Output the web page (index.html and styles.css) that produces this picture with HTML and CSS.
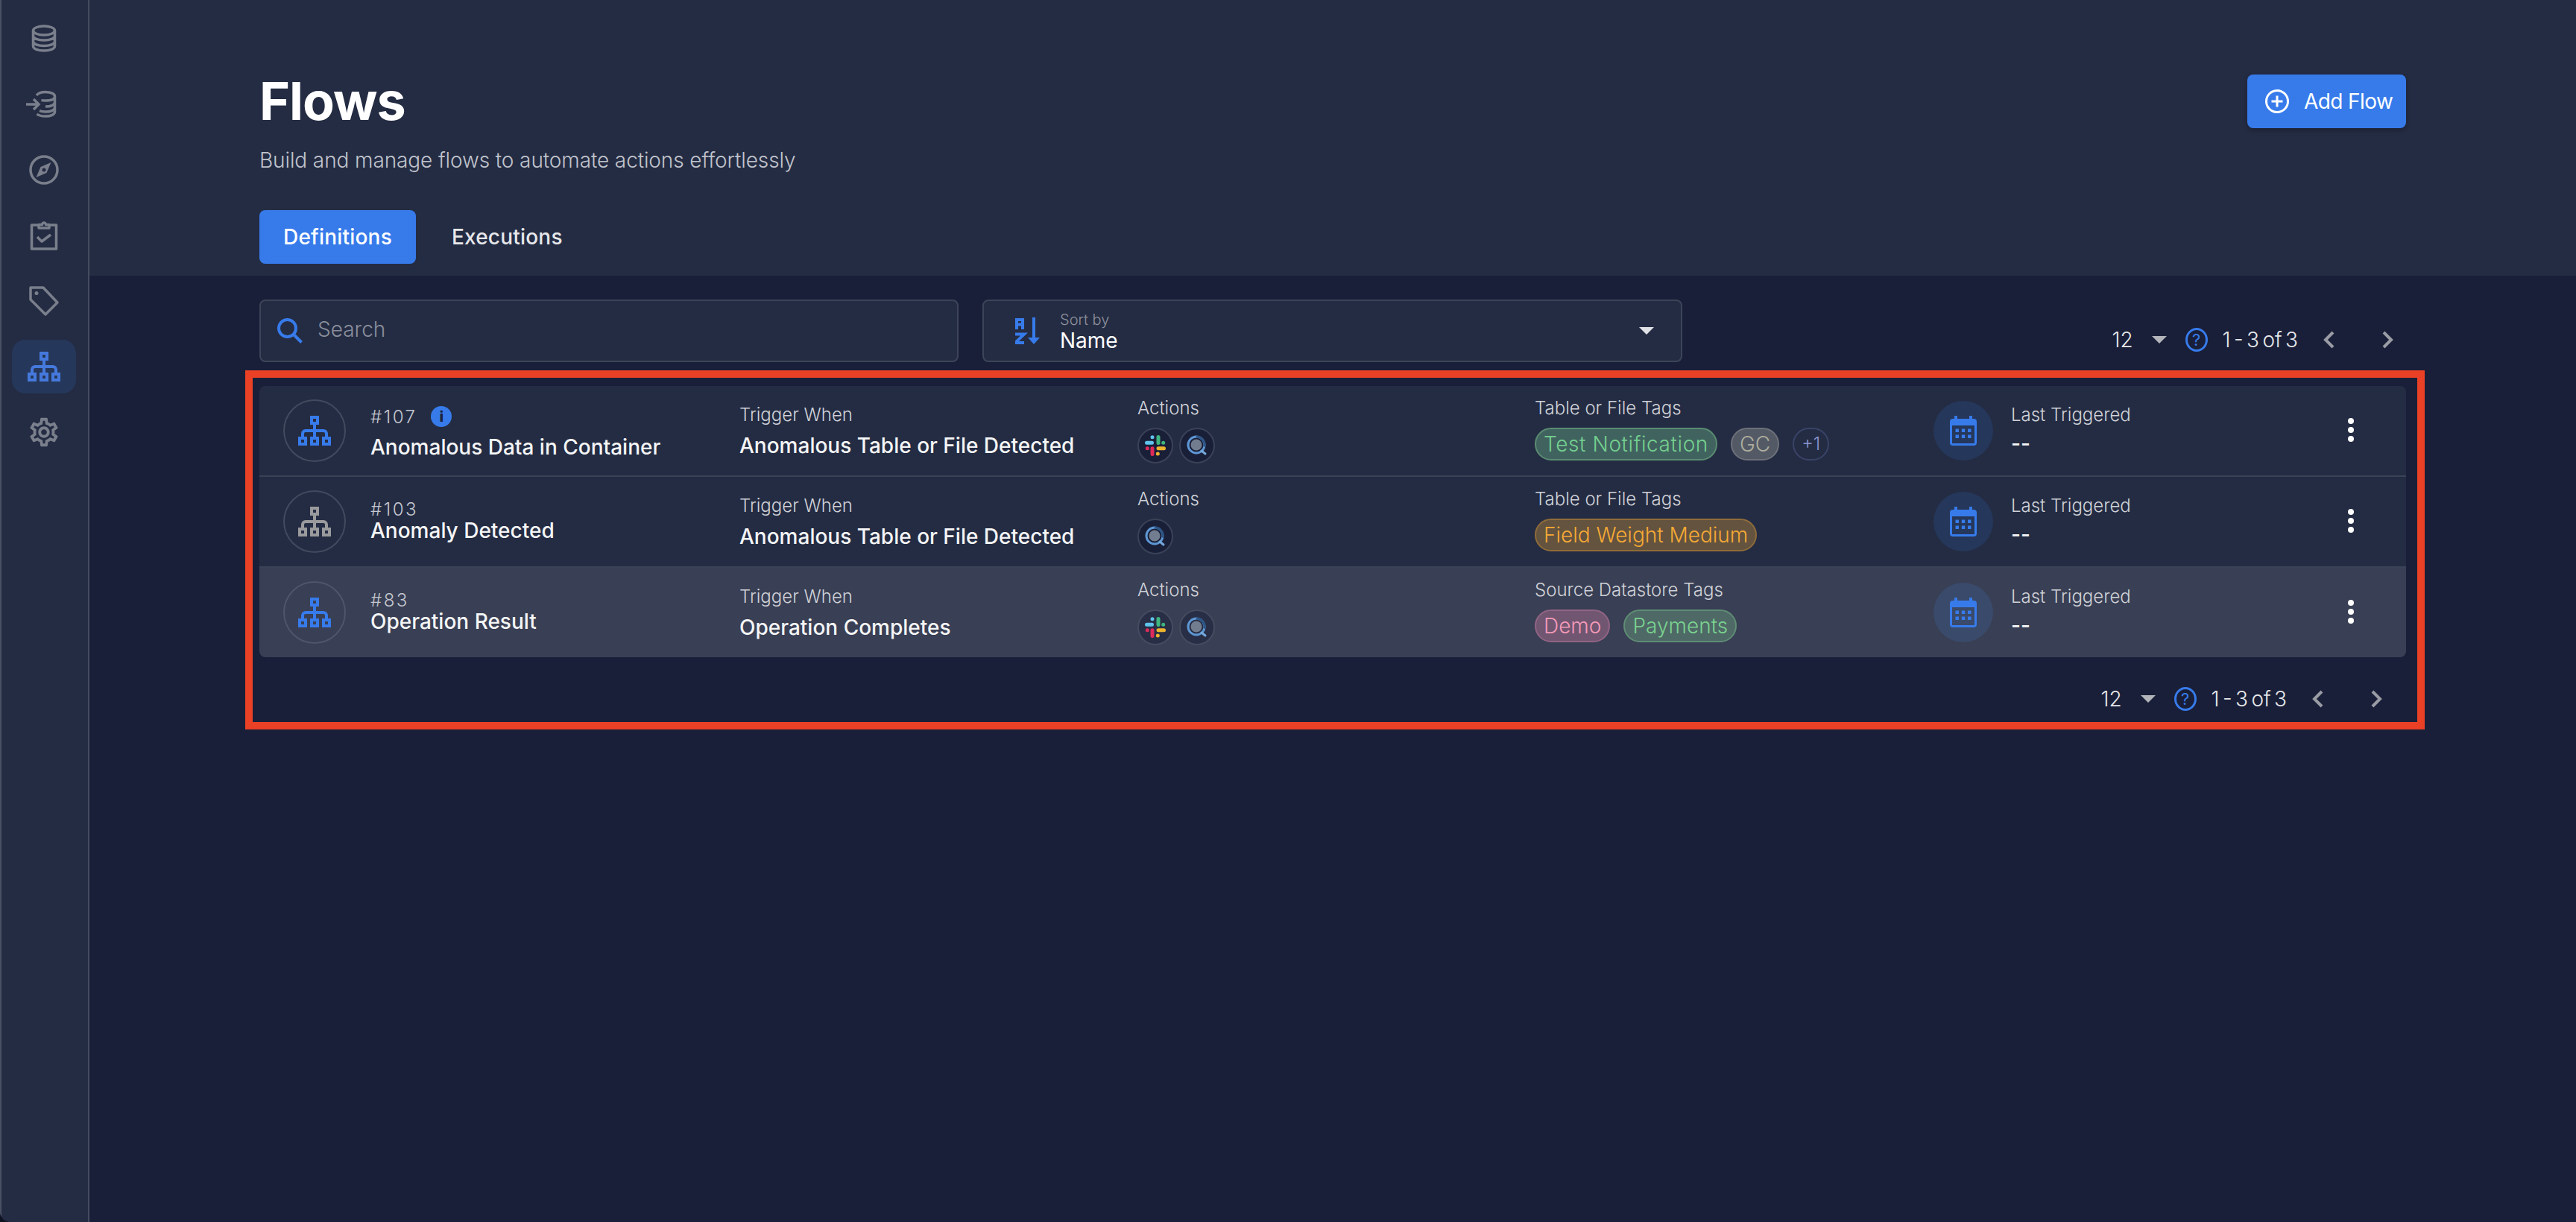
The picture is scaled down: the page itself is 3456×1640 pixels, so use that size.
FILE: index.html
```html
<!DOCTYPE html>
<html lang="en">
<head>
    <meta charset="UTF-8">
    <title>Flows</title>
    <link rel="stylesheet" href="styles.css">
</head>
<body>
    <!-- Shared icons -->
    <svg class="icon-defs" width="0" height="0">
        <symbol id="flow-icon" viewBox="0 0 44 40">
            <path fill="currentColor" fill-rule="evenodd" d="M16 0h12v12H16zM20 4v4h4V4zM0 28h12v12H0zM4 32v4h4v-4zM16 28h12v12H16zM20 32v4h4v-4zM32 28h12v12H32zM36 32v4h4v-4z"/>
            <path fill="none" stroke="currentColor" stroke-width="4" d="M22 12v16M6 28v-4a4 4 0 0 1 4-4h24a4 4 0 0 1 4 4v4"/>
        </symbol>
        <symbol id="calendar-icon" viewBox="0 0 36 40">
            <path fill="currentColor" fill-rule="evenodd" d="M6 0h4v4h16V0h4v4h2a4 4 0 0 1 4 4v28a4 4 0 0 1-4 4H4a4 4 0 0 1-4-4V8a4 4 0 0 1 4-4h2zM3 13v24h30V13z"/>
            <path fill="currentColor" d="M7.500 17.500h4.500v4.500H7.500zM15.800 17.500h4.500v4.500h-4.500zM24 17.500h4.500v4.500H24zM7.500 25.500h4.500v4.500H7.500zM15.800 25.500h4.500v4.500h-4.500zM24 25.500h4.500v4.500H24z"/>
        </symbol>
        <symbol id="slack-icon" viewBox="0 0 28 28">
            <g fill="none" stroke-width="5" stroke-linecap="round">
                <path stroke="#5fc3ea" d="M2.500 10.200h7M10 2.700h.01"/>
                <path stroke="#3fb57f" d="M18 2.500v8M24.700 10.300h.01"/>
                <path stroke="#dd2a5b" d="M3.300 17.700h.01M10 17.800v7.700"/>
                <path stroke="#ecb32e" d="M18 17.800h7.500M17.300 25h.01"/>
            </g>
        </symbol>
        <symbol id="quality-icon" viewBox="0 0 28 28">
            <circle cx="13" cy="13" r="7.500" fill="#727d90"/>
            <circle cx="13" cy="13" r="11" fill="none" stroke="#5e97d4" stroke-width="3"/>
            <path fill="none" stroke="#2c5484" stroke-width="3" d="M13 2a11 11 0 0 1 10.700 13.500"/>
            <path fill="none" stroke="#74a8dc" stroke-width="3" stroke-linecap="round" d="M20 21l5 4"/>
        </symbol>
        <symbol id="chevron-left" viewBox="0 0 16 24">
            <path fill="none" stroke="currentColor" stroke-width="4" d="M14 2L4 12l10 10"/>
        </symbol>
        <symbol id="chevron-right" viewBox="0 0 16 24">
            <path fill="none" stroke="currentColor" stroke-width="4" d="M2 2l10 10L2 22"/>
        </symbol>
    </svg>

    <div class="app">
        <!-- Sidebar -->
        <nav class="sidebar">
            <a class="nav-item">
                <svg class="nav-icon" viewBox="0 0 40 40" fill="none" stroke="currentColor" stroke-width="3.500">
                    <ellipse cx="20" cy="9" rx="14.500" ry="6"/>
                    <path d="M5.500 9v21c0 3.500 6.500 6 14.500 6s14.500-2.500 14.500-6V9M5.500 16c0 3.500 6.500 6 14.500 6s14.500-2.500 14.500-6M5.500 23.500c0 3.500 6.500 6 14.500 6s14.500-2.500 14.500-6"/>
                </svg>
            </a>
            <a class="nav-item">
                <svg class="nav-icon" viewBox="0 0 40 40" fill="none" stroke="currentColor" stroke-width="3.500">
                    <path d="M10 8c2-2.800 6-4.500 12-4.500 7.500 0 12.500 2.500 12.500 6S29.500 15 22 15c-2 0-4-.2-5.500-.7M34.500 9.500V30c0 3.500-5 6-12.500 6-5 0-9-1-11.500-3M34.500 17c0 3.500-5 6-12.500 6M34.500 24c0 3.500-5 6-12.500 6-3 0-5.500-.4-8-1.300"/>
                    <path d="M-4 20h17M6 13l7 7-7 7"/>
                </svg>
            </a>
            <a class="nav-item">
                <svg class="nav-icon" viewBox="0 0 40 40" fill="none" stroke="currentColor" stroke-width="3.500">
                    <circle cx="20" cy="20" r="18"/>
                    <path fill="currentColor" stroke="none" fill-rule="evenodd" d="M29.500 10l-6 14-14 6 6-14zM20 17.500a2.500 2.500 0 1 0 0 5 2.500 2.500 0 0 0 0-5z"/>
                </svg>
            </a>
            <a class="nav-item">
                <svg class="nav-icon" viewBox="0 0 40 40" fill="none" stroke="currentColor" stroke-width="3.500" stroke-linejoin="round">
                    <path d="M13 6H3.500v32h33V6H27"/>
                    <path d="M13 10V5.500h4.500a2.500 2.500 0 0 1 5 0H27V10z"/>
                    <path d="M11 22l6 6 12-9"/>
                </svg>
            </a>
            <a class="nav-item">
                <svg class="nav-icon" viewBox="0 0 40 40" fill="none" stroke="currentColor" stroke-width="3.500" stroke-linejoin="round">
                    <path d="M2 2h17l19 20-16 16L2 18z"/>
                    <circle cx="10" cy="9.500" r="2.500" fill="currentColor" stroke="none"/>
                </svg>
            </a>
            <a class="nav-item nav-item-active">
                <svg class="flow-svg"><use href="#flow-icon"/></svg>
            </a>
            <a class="nav-item">
                <svg class="gear-icon" viewBox="0 0 24 24" fill="currentColor">
                    <path d="M19.430 12.980c.04-.32.07-.64.07-.98 0-.34-.03-.66-.07-.98l2.110-1.650c.19-.15.24-.42.12-.64l-2-3.460c-.09-.16-.26-.25-.44-.25-.06 0-.12.01-.17.03l-2.490 1c-.52-.4-1.080-.73-1.690-.98l-.38-2.650C14.460 2.180 14.250 2 14 2h-4c-.25 0-.46.18-.49.42l-.38 2.650c-.61.25-1.170.59-1.690.98l-2.490-1c-.06-.02-.12-.03-.18-.03-.17 0-.34.09-.43.25l-2 3.460c-.13.22-.07.49.12.64l2.110 1.650c-.04.32-.07.65-.07.98 0 .33.03.66.07.98l-2.110 1.650c-.19.15-.24.42-.12.64l2 3.460c.09.16.26.25.44.25.06 0 .12-.01.17-.03l2.490-1c.52.4 1.080.73 1.690.98l.38 2.650c.03.24.24.42.49.42h4c.25 0 .46-.18.49-.42l.38-2.650c.61-.25 1.170-.59 1.690-.98l2.490 1c.06.02.12.03.18.03.17 0 .34-.09.43-.25l2-3.460c.12-.22.07-.49-.12-.64l-2.110-1.650zm-1.980-1.710c.04.31.05.52.05.73 0 .21-.02.43-.05.73l-.14 1.130.89.7 1.080.84-.7 1.210-1.270-.51-1.040-.42-.9.68c-.43.32-.84.56-1.250.73l-1.060.43-.16 1.130-.2 1.350h-1.400l-.19-1.350-.16-1.130-1.060-.43c-.43-.18-.83-.41-1.230-.71l-.91-.7-1.060.43-1.270.51-.7-1.210 1.080-.84.89-.7-.14-1.130c-.03-.31-.05-.54-.05-.74s.02-.43.05-.73l.14-1.130-.89-.7-1.080-.84.7-1.210 1.270.51 1.040.42.9-.68c.43-.32.84-.56 1.250-.73l1.060-.43.16-1.130.2-1.350h1.390l.19 1.350.16 1.130 1.060.43c.43.18.83.41 1.230.71l.91.7 1.060-.43 1.270-.51.7 1.210-1.070.85-.89.7.14 1.130zM12 8c-2.210 0-4 1.790-4 4s1.790 4 4 4 4-1.790 4-4-1.790-4-4-4zm0 6c-1.100 0-2-.9-2-2s.9-2 2-2 2 .9 2 2-.9 2-2 2z"/>
                </svg>
            </a>
        </nav>

        <main class="main">
            <!-- Page header -->
            <header class="page-head">
                <div class="head-top">
                    <div>
                        <h1 class="page-title">Flows</h1>
                        <p class="page-subtitle">Build and manage flows to automate actions effortlessly</p>
                    </div>
                    <button class="add-button">
                        <svg class="add-icon" viewBox="0 0 32 32" fill="none" stroke="currentColor" stroke-width="3">
                            <circle cx="16" cy="16" r="14.500"/>
                            <path d="M16 8.500v15M8.500 16h15"/>
                        </svg>
                        Add Flow
                    </button>
                </div>
                <div class="tabs">
                    <div class="tab tab-active">Definitions</div>
                    <div class="tab">Executions</div>
                </div>
            </header>

            <section class="content">
                <!-- Search, sort, pagination -->
                <div class="toolbar">
                    <div class="field search-field">
                        <svg class="search-icon" viewBox="0 0 34 34" fill="none" stroke="currentColor" stroke-width="4">
                            <circle cx="13.500" cy="13.500" r="11.500"/>
                            <path d="M22 22l10.500 10.500"/>
                        </svg>
                        <span class="search-text">Search</span>
                    </div>
                    <div class="field sort-field">
                        <svg class="sort-icon" viewBox="0 0 34 36" fill="none" stroke="currentColor" stroke-width="4">
                            <path d="M2 16V3h8v13M2 9.500h8"/>
                            <path d="M0 22.500h12L0 34h12"/>
                            <path d="M25 0v28"/>
                            <path fill="currentColor" stroke="none" d="M17 27h16l-8 9z"/>
                        </svg>
                        <div class="sort-text">
                            <span class="sort-label">Sort by</span>
                            <span class="sort-value">Name</span>
                        </div>
                        <span class="sort-caret"></span>
                    </div>
                    <div class="pagination">
                        <span>12</span>
                        <span class="page-caret"></span>
                        <span class="help-icon">?</span>
                        <span class="page-range">1 - 3 of 3</span>
                        <svg class="chevron chevron-prev"><use href="#chevron-left"/></svg>
                        <svg class="chevron chevron-next"><use href="#chevron-right"/></svg>
                    </div>
                </div>

                <div class="panel">
                    <div class="flow-list">
                        <!-- Flow 107 -->
                        <div class="flow-row">
                            <div class="flow-name flow-name-info">
                                <div class="flow-avatar"><svg class="flow-svg"><use href="#flow-icon"/></svg></div>
                                <div>
                                    <div class="flow-id-line">
                                        <span class="flow-id">#107</span>
                                        <span class="info-icon">i</span>
                                    </div>
                                    <div class="flow-title">Anomalous Data in Container</div>
                                </div>
                            </div>
                            <div class="flow-trigger">
                                <div class="label">Trigger When</div>
                                <div class="trigger-value">Anomalous Table or File Detected</div>
                            </div>
                            <div class="flow-stack">
                                <div class="label">Actions</div>
                                <div class="action-icons">
                                    <span class="action-icon"><svg><use href="#slack-icon"/></svg></span>
                                    <span class="action-icon"><svg><use href="#quality-icon"/></svg></span>
                                </div>
                            </div>
                            <div class="flow-stack">
                                <div class="label">Table or File Tags</div>
                                <div class="tags">
                                    <span class="tag tag-green">Test Notification</span>
                                    <span class="tag tag-gray">GC</span>
                                    <span class="tag tag-more">+1</span>
                                </div>
                            </div>
                            <div class="flow-last">
                                <div class="calendar-badge"><svg><use href="#calendar-icon"/></svg></div>
                                <div class="last-text">
                                    <div class="label">Last Triggered</div>
                                    <div class="last-value">--</div>
                                </div>
                                <div class="more-dots"><i></i><i></i><i></i></div>
                            </div>
                        </div>

                        <!-- Flow 103 -->
                        <div class="flow-row">
                            <div class="flow-name">
                                <div class="flow-avatar flow-avatar-off"><svg class="flow-svg"><use href="#flow-icon"/></svg></div>
                                <div>
                                    <div class="flow-id-line"><span class="flow-id">#103</span></div>
                                    <div class="flow-title">Anomaly Detected</div>
                                </div>
                            </div>
                            <div class="flow-trigger">
                                <div class="label">Trigger When</div>
                                <div class="trigger-value">Anomalous Table or File Detected</div>
                            </div>
                            <div class="flow-stack">
                                <div class="label">Actions</div>
                                <div class="action-icons">
                                    <span class="action-icon"><svg><use href="#quality-icon"/></svg></span>
                                </div>
                            </div>
                            <div class="flow-stack">
                                <div class="label">Table or File Tags</div>
                                <div class="tags">
                                    <span class="tag tag-orange">Field Weight Medium</span>
                                </div>
                            </div>
                            <div class="flow-last">
                                <div class="calendar-badge"><svg><use href="#calendar-icon"/></svg></div>
                                <div class="last-text">
                                    <div class="label">Last Triggered</div>
                                    <div class="last-value">--</div>
                                </div>
                                <div class="more-dots"><i></i><i></i><i></i></div>
                            </div>
                        </div>

                        <!-- Flow 83 (hovered) -->
                        <div class="flow-row flow-row-hover">
                            <div class="flow-name">
                                <div class="flow-avatar"><svg class="flow-svg"><use href="#flow-icon"/></svg></div>
                                <div>
                                    <div class="flow-id-line"><span class="flow-id">#83</span></div>
                                    <div class="flow-title">Operation Result</div>
                                </div>
                            </div>
                            <div class="flow-trigger">
                                <div class="label">Trigger When</div>
                                <div class="trigger-value">Operation Completes</div>
                            </div>
                            <div class="flow-stack">
                                <div class="label">Actions</div>
                                <div class="action-icons">
                                    <span class="action-icon"><svg><use href="#slack-icon"/></svg></span>
                                    <span class="action-icon"><svg><use href="#quality-icon"/></svg></span>
                                </div>
                            </div>
                            <div class="flow-stack">
                                <div class="label">Source Datastore Tags</div>
                                <div class="tags">
                                    <span class="tag tag-pink">Demo</span>
                                    <span class="tag tag-mint">Payments</span>
                                </div>
                            </div>
                            <div class="flow-last">
                                <div class="calendar-badge"><svg><use href="#calendar-icon"/></svg></div>
                                <div class="last-text">
                                    <div class="label">Last Triggered</div>
                                    <div class="last-value">--</div>
                                </div>
                                <div class="more-dots"><i></i><i></i><i></i></div>
                            </div>
                        </div>
                    </div>

                    <div class="pagination pagination-bottom">
                        <span>12</span>
                        <span class="page-caret"></span>
                        <span class="help-icon">?</span>
                        <span class="page-range">1 - 3 of 3</span>
                        <svg class="chevron chevron-prev"><use href="#chevron-left"/></svg>
                        <svg class="chevron chevron-next"><use href="#chevron-right"/></svg>
                    </div>

                    <!-- Annotation drawn over the list -->
                    <div class="highlight-box"></div>
                </div>
            </section>
        </main>
    </div>
</body>
</html>
```

FILE: styles.css
```css
/* Base Styles */
* {
    margin: 0;
    padding: 0;
    box-sizing: border-box;
}

html, body {
    height: 100%;
}

body {
    background: #0f1220;
    color: #ffffff;
    font-family: Inter, "Noto Sans", sans-serif;
    font-size: 28px;
    overflow: hidden;
}

.icon-defs {
    position: absolute;
}

/* App */
.app {
    display: flex;
    height: 1640px;
    background: #191f38;
    border-bottom-left-radius: 14px;
    overflow: hidden;
}

/* Sidebar */
.sidebar {
    width: 120px;
    flex-shrink: 0;
    display: flex;
    flex-direction: column;
    gap: 16px;
    padding: 16px 0 0 14px;
    background: #242c43;
    border-left: 2px solid #4a5164;
    border-right: 2px solid #454c60;
}

.nav-item {
    width: 86px;
    height: 72px;
    display: flex;
    align-items: center;
    justify-content: center;
    border-radius: 18px;
    color: #7a7f8c;
}

.nav-item-active {
    background: #25375a;
    color: #4579dc;
}

.nav-icon {
    width: 40px;
    height: 40px;
    overflow: visible;
}

.gear-icon {
    width: 46px;
    height: 46px;
}

.flow-svg {
    width: 44px;
    height: 40px;
}

/* Page header */
.main {
    flex: 1;
    min-width: 0;
}

.page-head {
    height: 370px;
    padding: 100px 228px 0;
    background: #242c43;
}

.head-top {
    display: flex;
    justify-content: space-between;
    align-items: flex-start;
}

.page-title {
    font-size: 70px;
    font-weight: 700;
    line-height: 72px;
    letter-spacing: -1px;
}

.page-subtitle {
    margin-top: 26px;
    font-size: 28px;
    font-weight: 300;
    line-height: 34px;
    letter-spacing: -0.1px;
    color: #c0c3cc;
}

.add-button {
    width: 213px;
    height: 72px;
    display: flex;
    align-items: center;
    gap: 20px;
    padding-left: 24px;
    background: #377beb;
    color: white;
    border: none;
    border-radius: 8px;
    box-shadow: 0 3px 6px rgba(0,0,0,0.25);
    font-family: inherit;
    font-size: 28px;
    font-weight: 400;
    letter-spacing: -0.6px;
}

.add-icon {
    width: 32px;
    height: 32px;
    flex-shrink: 0;
}

.tabs {
    display: flex;
    gap: 8px;
    margin-top: 50px;
}

.tab {
    height: 72px;
    padding: 0 40px;
    display: flex;
    align-items: center;
    border-radius: 8px;
    font-weight: 500;
    letter-spacing: 0.2px;
    color: #e6e7ea;
}

.tab-active {
    background: #377beb;
    color: white;
    padding: 0 32px;
}

/* Toolbar */
.content {
    padding: 32px 228px 0;
}

.toolbar {
    display: flex;
    gap: 32px;
}

.field {
    height: 84px;
    width: 938px;
    display: flex;
    align-items: center;
    background: #242c43;
    border: 2px solid #3c4459;
    border-radius: 8px;
}

.sort-field {
    width: 939px;
}

.search-icon {
    width: 34px;
    height: 34px;
    margin-left: 22px;
    color: #377beb;
}

.search-text {
    margin: 0 0 4px 20px;
    font-weight: 300;
    color: #8a8e9c;
}

.sort-icon {
    width: 34px;
    height: 36px;
    margin-left: 42px;
    color: #377beb;
}

.sort-text {
    display: flex;
    flex-direction: column;
    margin: 4px 0 0 26px;
    flex: 1;
}

.sort-label {
    font-size: 20px;
    font-weight: 300;
    line-height: 22px;
    color: #8d919d;
}

.sort-value {
    line-height: 34px;
}

.sort-caret {
    margin-right: 36px;
    border-left: 10px solid transparent;
    border-right: 10px solid transparent;
    border-top: 10px solid #e0e1e5;
}

/* Pagination */
.pagination {
    display: flex;
    align-items: center;
    height: 32px;
    color: #e6e7ea;
    font-weight: 300;
}

.toolbar .pagination {
    margin: auto 16px 14px auto;
}

.pagination-bottom {
    justify-content: flex-end;
    margin: 40px 31px 0 0;
}

.page-caret {
    margin-left: 25px;
    border-left: 10px solid transparent;
    border-right: 10px solid transparent;
    border-top: 10px solid #b3b5bb;
}

.help-icon {
    width: 30px;
    height: 32px;
    margin-left: 25px;
    display: flex;
    align-items: center;
    justify-content: center;
    border: 3px solid #377beb;
    border-radius: 50%;
    color: #377beb;
    font-size: 22px;
    font-weight: 400;
}

.page-range {
    margin-left: 20px;
    word-spacing: -3.500px;
}

.chevron {
    width: 16px;
    height: 24px;
    color: #9a9ca5;
}

.chevron-prev {
    margin-left: 33px;
}

.chevron-next {
    margin-left: 64px;
}

/* Flow list */
.panel {
    position: relative;
    margin-top: 32px;
}

.flow-list {
    border-radius: 8px;
    overflow: hidden;
}

.flow-row {
    height: 122px;
    display: grid;
    grid-template-columns: 612px 534px 533px 535px 1fr;
    align-items: center;
    padding-left: 32px;
    background: #242c43;
    border-bottom: 2px solid #3a4257;
}

.flow-row:last-child {
    height: 120px;
    border-bottom: none;
}

.flow-row-hover {
    background: #393f54;
}

.flow-name {
    display: flex;
    align-items: center;
    gap: 33px;
}

.flow-avatar {
    width: 84px;
    height: 84px;
    flex-shrink: 0;
    display: flex;
    align-items: center;
    justify-content: center;
    border: 2px solid #414a5e;
    border-radius: 50%;
    color: #377beb;
}

.flow-row-hover .flow-avatar {
    border-color: #4f566a;
}

.flow-avatar-off {
    color: #9a9a9d;
}

.flow-id-line {
    display: flex;
    align-items: center;
    gap: 19px;
    height: 28px;
}

.flow-name-info .flow-id-line {
    height: 52px;
}

.flow-name-info {
    padding-bottom: 4px;
}

.flow-name-info .flow-avatar {
    margin-bottom: -4px;
}

.flow-id {
    font-size: 24px;
    font-weight: 300;
    letter-spacing: 2.500px;
    color: #c4c7cf;
}

.info-icon {
    width: 28px;
    height: 28px;
    display: flex;
    align-items: center;
    justify-content: center;
    background: #377beb;
    border-radius: 50%;
    color: #1a2340;
    font-size: 20px;
    font-weight: 800;
}

.flow-title, .trigger-value {
    font-size: 28px;
    font-weight: 500;
    line-height: 34px;
    color: #f4f5f6;
    white-space: nowrap;
}

.flow-title {
    margin: -2px 0 2px;
}

.label {
    font-size: 24px;
    font-weight: 300;
    line-height: 30px;
    color: #d0d2d8;
    white-space: nowrap;
}

.trigger-value {
    margin-top: 9px;
}

.flow-stack {
    padding-bottom: 2px;
}

.action-icons, .tags {
    display: flex;
    height: 48px;
    margin-top: 11px;
}

.action-icons {
    gap: 8px;
}

.action-icon {
    width: 48px;
    height: 48px;
    display: flex;
    align-items: center;
    justify-content: center;
    background: #1a1f38;
    border: 2px solid #3a4257;
    border-radius: 50%;
}

.flow-row-hover .action-icon {
    background: #282e45;
    border-color: #454c60;
}

.action-icon svg {
    width: 28px;
    height: 28px;
}

/* Tags */
.tags {
    gap: 18px;
}

.tag {
    height: 44px;
    padding: 0 10px;
    display: flex;
    align-items: center;
    border: 2px solid;
    border-radius: 22px;
    font-weight: 300;
    white-space: nowrap;
}

.tag-green {
    background: #416360;
    border-color: #5a8c72;
    color: #74d08f;
    letter-spacing: 0.6px;
}

.tag-gray {
    background: #535a66;
    border-color: #6d7179;
    color: #aeae9e;
}

.tag-more {
    background: transparent;
    border-color: #3a4468;
    color: #8b95cf;
    font-size: 24px;
}

.tag-orange {
    background: #63533f;
    border-color: #8f6c39;
    color: #f5a935;
}

.tag-pink {
    background: #715672;
    border-color: #916484;
    color: #f59ab8;
}

.tag-mint {
    background: #4e6966;
    border-color: #5f8d75;
    color: #7bd190;
}

/* Last triggered */
.flow-last {
    display: flex;
    align-items: center;
    gap: 24px;
    padding-right: 70px;
}

.calendar-badge {
    width: 80px;
    height: 80px;
    flex-shrink: 0;
    display: flex;
    align-items: center;
    justify-content: center;
    background: #25375a;
    border-radius: 50%;
    color: #377beb;
}

.flow-row-hover .calendar-badge {
    background: #3a4a6a;
}

.calendar-badge svg {
    width: 36px;
    height: 40px;
}

.last-text {
    flex: 1;
    padding-bottom: 4px;
}

.last-value {
    margin-top: 8px;
    line-height: 30px;
    font-weight: 500;
    color: #f4f5f6;
}

.more-dots {
    display: flex;
    flex-direction: column;
    gap: 4px;
    margin-bottom: 2px;
}

.more-dots i {
    width: 8px;
    height: 8px;
    background: white;
    border-radius: 50%;
}

/* Red annotation */
.highlight-box {
    position: absolute;
    top: -21px;
    left: -19px;
    right: -25px;
    bottom: -25px;
    border: 10px solid #e94026;
    pointer-events: none;
}
```
